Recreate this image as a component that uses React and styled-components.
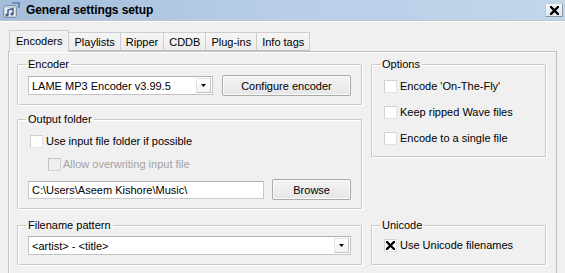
import React from 'react'
import styled, { createGlobalStyle } from 'styled-components'

const GlobalStyle = createGlobalStyle`
    html, body {
        margin: 0;
        padding: 0;
        background: #f0f0f0;
        overflow: hidden;
    }
    body {
        font-family: "Liberation Sans", Arial, sans-serif;
        font-size: 11px;
        color: #000;
    }
`

const Window = styled.div`
    width: 565px;
    height: 273px;
    background: #f0f0f0;
    overflow: hidden;
`

const TitleBar = styled.div`
    height: 20px;
    flex-shrink: 0;
    display: flex;
    align-items: center;
    padding: 0 2px 0 3px;
    background: linear-gradient(to right, #a3bddb 0%, #b7cde6 45%, #c2d6ec 100%);
    border-bottom: 1px solid #b9c3cc;
    box-shadow: 0 1px 0 #ffffff;
`

const Title = styled.span`
    flex: 1;
    margin-left: 6px;
    font-size: 12px;
    font-weight: bold;
    color: #000;
    letter-spacing: -0.1px;
`

const CloseButton = styled.div`
    width: 18px;
    height: 14px;
    display: flex;
    align-items: center;
    justify-content: center;
    background: linear-gradient(#f4f7fb, #dfe7f0);
    border: 1px solid #c4ccd6;
    border-right-color: #8d97a3;
    border-bottom-color: #8d97a3;
    box-sizing: border-box;
`

const Body = styled.div`
    padding: 9px 8px 0 8px;
    display: flex;
    flex-direction: column;
`

const TabStrip = styled.div`
    display: flex;
    align-items: flex-end;
    height: 21px;
    flex-shrink: 0;
    padding-left: 1px;
    position: relative;
    z-index: 1;
`

const Tab = styled.div`
    height: ${p => (p.$active ? '22px' : '19px')};
    margin-bottom: ${p => (p.$active ? '-1px' : '0')};
    display: flex;
    align-items: center;
    padding: 0 ${p => (p.$active ? '6px' : '5px')} ${p => (p.$active ? '2px' : '0')};
    box-sizing: border-box;
    background: ${p => (p.$active ? '#f0f0f0' : 'linear-gradient(#f6f6f6, #ececec)')};
    border: 1px solid #cdcdcd;
    border-bottom: ${p => (p.$active ? 'none' : '1px solid #c0c0c0')};
    border-left: ${p => (p.$first || p.$active ? '1px solid #cdcdcd' : 'none')};
    white-space: nowrap;
`

const TabPanel = styled.div`
    border: 1px solid #c0c0c0;
    box-shadow: inset 1px 1px 0 #ffffff;
    padding: 6px 10px 12px 8px;
    display: grid;
    grid-template-columns: 345px 175px;
    column-gap: 9px;
    row-gap: 10px;
    align-items: stretch;
`

const Stack = styled.div`
    display: flex;
    flex-direction: column;
    gap: 8px;
`

const Group = styled.fieldset`
    margin: 0;
    min-width: 0;
    padding: ${p => p.$pad || '4px 10px 8px 10px'};
    border: 1px solid #cacaca;
    border-radius: 1px;
    box-shadow: inset 1px 1px 0 #ffffff, 1px 1px 0 #ffffff;
    align-self: ${p => p.$align || 'stretch'};
    display: flex;
    flex-direction: column;
    gap: ${p => p.$gap || '0px'};

    legend {
        padding: 0 2px;
        margin-left: -2px;
        line-height: 13px;
        font-size: 11px;
    }
`

const Row = styled.div`
    display: flex;
    align-items: center;
    gap: ${p => p.$gap || '9px'};
`

const ComboBox = styled.div`
    width: ${p => p.$width};
    height: 19px;
    box-sizing: border-box;
    background: #fff;
    border: 1px solid #c3c3c3;
    border-top-color: #b0b0b0;
    display: flex;
    align-items: center;
    span {
        flex: 1;
        padding-left: 3px;
        white-space: nowrap;
        overflow: hidden;
    }
`

const DropArrow = styled.div`
    width: 15px;
    height: 15px;
    margin-right: 1px;
    box-sizing: border-box;
    border: 1px solid #e2e2e2;
    border-right-color: #c4c4c4;
    border-bottom-color: #c4c4c4;
    background: linear-gradient(#ffffff, #f2f2f2);
    display: flex;
    align-items: center;
    justify-content: center;
`

const TextBox = styled.div`
    width: ${p => p.$width};
    height: 18px;
    box-sizing: border-box;
    background: #fff;
    border: 1px solid #c9c9c9;
    border-top-color: #b3b3b3;
    display: flex;
    align-items: center;
    padding-left: 3px;
    white-space: nowrap;
`

const Button = styled.div`
    width: ${p => p.$width};
    height: 21px;
    box-sizing: border-box;
    display: flex;
    align-items: center;
    justify-content: center;
    border: 1px solid #a9a9a9;
    border-radius: 2px;
    background: linear-gradient(#f3f3f3, #e6e6e6);
    box-shadow: inset 0 0 0 1px #fbfbfb;
    font-size: 11px;
`

const CheckRow = styled.div`
    height: 16px;
    display: flex;
    align-items: center;
    gap: ${p => (p.$disabled ? '2px' : '3px')};
    padding-left: ${p => p.$indent || '2px'};
    color: ${p => (p.$disabled ? '#a3a3a3' : '#000')};
    white-space: nowrap;
`

const Box = styled.div`
    width: 13px;
    height: 13px;
    box-sizing: border-box;
    background: ${p => (p.$disabled ? '#f0f0f0' : '#ffffff')};
    border: 1px solid ${p => (p.$disabled ? '#d2d2d2' : '#e2e2e2')};
    border-top-color: ${p => (p.$disabled ? '#c4c4c4' : '#d0d0d0')};
    border-left-color: ${p => (p.$disabled ? '#c4c4c4' : '#d0d0d0')};
    display: flex;
    align-items: center;
    justify-content: center;
`

const AppIcon = () => (
    <svg width="17" height="16" viewBox="0 0 17 16">
        <rect x="0.5" y="3.5" width="13" height="12" rx="2" fill="#c9d3de" stroke="#8190a3" />
        <rect x="2" y="6" width="10" height="8" fill="#e9eef4" />
        <path d="M5 13 L5 8 L10 6.5 L10 12" stroke="#3f5d85" strokeWidth="1.4" fill="none" />
        <circle cx="4" cy="13" r="1.6" fill="#3f5d85" />
        <circle cx="9" cy="12" r="1.6" fill="#3f5d85" />
        <path d="M9 1 L16 1 L16 6" stroke="#5e7fa6" strokeWidth="1.6" fill="none" />
    </svg>
)

const Arrow = () => (
    <svg width="5" height="3" viewBox="0 0 5 3">
        <path d="M0 0 H5 L2.5 3 Z" fill="#000" />
    </svg>
)

const Cross = ({ size = 9, w = 2.2 }) => (
    <svg width={size} height={size} viewBox="0 0 9 9">
        <path d="M1 1 L8 8 M8 1 L1 8" stroke="#000" strokeWidth={w} strokeLinecap="square" />
    </svg>
)

const Check = ({ label, checked, disabled, indent }) => (
    <CheckRow $disabled={disabled} $indent={indent}>
        <Box $disabled={disabled}>{checked && <Cross size={9} w={2.3} />}</Box>
        <span>{label}</span>
    </CheckRow>
)

const tabs = ['Encoders', 'Playlists', 'Ripper', 'CDDB', 'Plug-ins', 'Info tags']

const App = () => {
    return (
        <Window>
            <GlobalStyle />
            <TitleBar>
                <AppIcon />
                <Title>General settings setup</Title>
                <CloseButton>
                    <Cross size={9} w={2.4} />
                </CloseButton>
            </TitleBar>
            <Body>
                <TabStrip>
                    {tabs.map((t, i) => (
                        <Tab key={t} $active={i === 0} $first={i === 0}>{t}</Tab>
                    ))}
                </TabStrip>
                <TabPanel>
                    <Stack>
                        <Group $pad="4px 10px 8px 10px">
                            <legend>Encoder</legend>
                            <Row $gap="9px">
                                <ComboBox $width="186px">
                                    <span>LAME MP3 Encoder v3.99.5</span>
                                    <DropArrow><Arrow /></DropArrow>
                                </ComboBox>
                                <Button $width="130px">Configure encoder</Button>
                            </Row>
                        </Group>
                        <Group $pad="7px 10px 8px 10px" $gap="7px">
                            <legend>Output folder</legend>
                            <Check label="Use input file folder if possible" />
                            <Check label="Allow overwriting input file" disabled indent="20px" />
                            <Row $gap="8px">
                                <TextBox $width="237px">C:\Users\Aseem Kishore\Music\</TextBox>
                                <Button $width="79px">Browse</Button>
                            </Row>
                        </Group>
                    </Stack>
                    <Group $pad="7px 10px 10px 10px" $gap="10px" $align="start">
                        <legend>Options</legend>
                        <Check label="Encode 'On-The-Fly'" />
                        <Check label="Keep ripped Wave files" />
                        <Check label="Encode to a single file" />
                    </Group>
                    <Group $pad="4px 10px 9px 10px">
                        <legend>Filename pattern</legend>
                        <ComboBox $width="323px">
                            <span>&lt;artist&gt; - &lt;title&gt;</span>
                            <DropArrow><Arrow /></DropArrow>
                        </ComboBox>
                    </Group>
                    <Group $pad="5px 10px 9px 10px">
                        <legend>Unicode</legend>
                        <Check label="Use Unicode filenames" checked />
                    </Group>
                </TabPanel>
            </Body>
        </Window>
    )
}

export default App
